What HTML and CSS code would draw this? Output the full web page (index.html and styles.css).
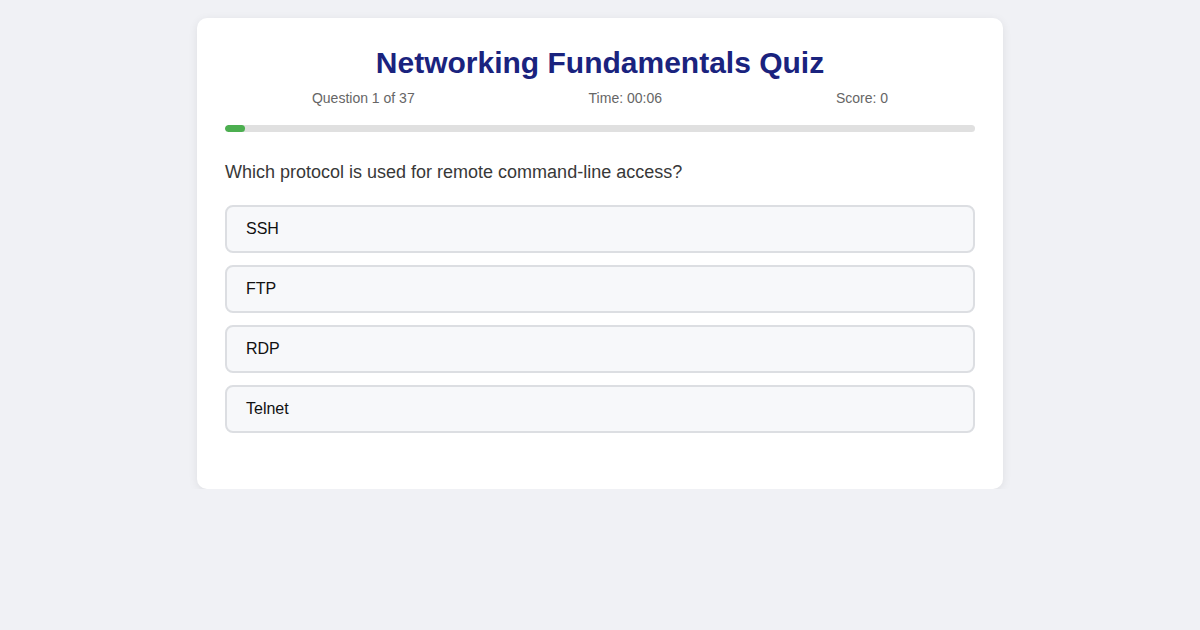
FILE: index.html
```html
<!DOCTYPE html>
<html>
<head>
<meta charset="utf-8">
<link rel="stylesheet" href="styles.css">
</head>
<body>
<div class="card">
  <h1 class="title">Networking Fundamentals Quiz</h1>
  <div class="stats">
    <span>Question 1 of 37</span>
    <span>Time: 00:06</span>
    <span>Score: 0</span>
  </div>
  <div class="progress"><div class="progress-fill" style="width: 2.7%"></div></div>
  <p class="question">Which protocol is used for remote command-line access?</p>
  <div class="options">
    <div class="option">SSH</div>
    <div class="option">FTP</div>
    <div class="option">RDP</div>
    <div class="option">Telnet</div>
  </div>
</div>
</body>
</html>
```
FILE: styles.css
```css
html, body {
  margin: 0;
  padding: 0;
}
body {
  background: #f0f1f5;
  font-family: "Liberation Sans", Arial, sans-serif;
  padding-top: 18px;
}
.card {
  width: 750px;
  margin: 0 auto;
  background: #fff;
  border-radius: 10px;
  padding: 28px 28px 56px;
  box-shadow: 0 2px 10px rgba(0,0,0,0.08);
}
.title {
  margin: 0;
  text-align: center;
  font-size: 30px;
  line-height: 34px;
  color: #1a237e;
  font-weight: bold;
}
.stats {
  display: flex;
  justify-content: space-around;
  margin-top: 10px;
  font-size: 14px;
  line-height: 16px;
  color: #666;
}
.progress {
  margin-top: 19px;
  height: 7px;
  background: #e0e0e0;
  border-radius: 4px;
  overflow: hidden;
}
.progress-fill {
  height: 100%;
  background: #4caf50;
  border-radius: 4px;
}
.question {
  margin: 30px 0 0;
  font-size: 18px;
  line-height: 21px;
  color: #383838;
}
.options {
  margin-top: 22px;
  display: flex;
  flex-direction: column;
  gap: 12px;
}
.option {
  border: 2px solid #dcdee2;
  border-radius: 8px;
  background: #f7f8fa;
  padding: 13px 19px;
  font-size: 16px;
  line-height: 18px;
  color: #111;
}
```
